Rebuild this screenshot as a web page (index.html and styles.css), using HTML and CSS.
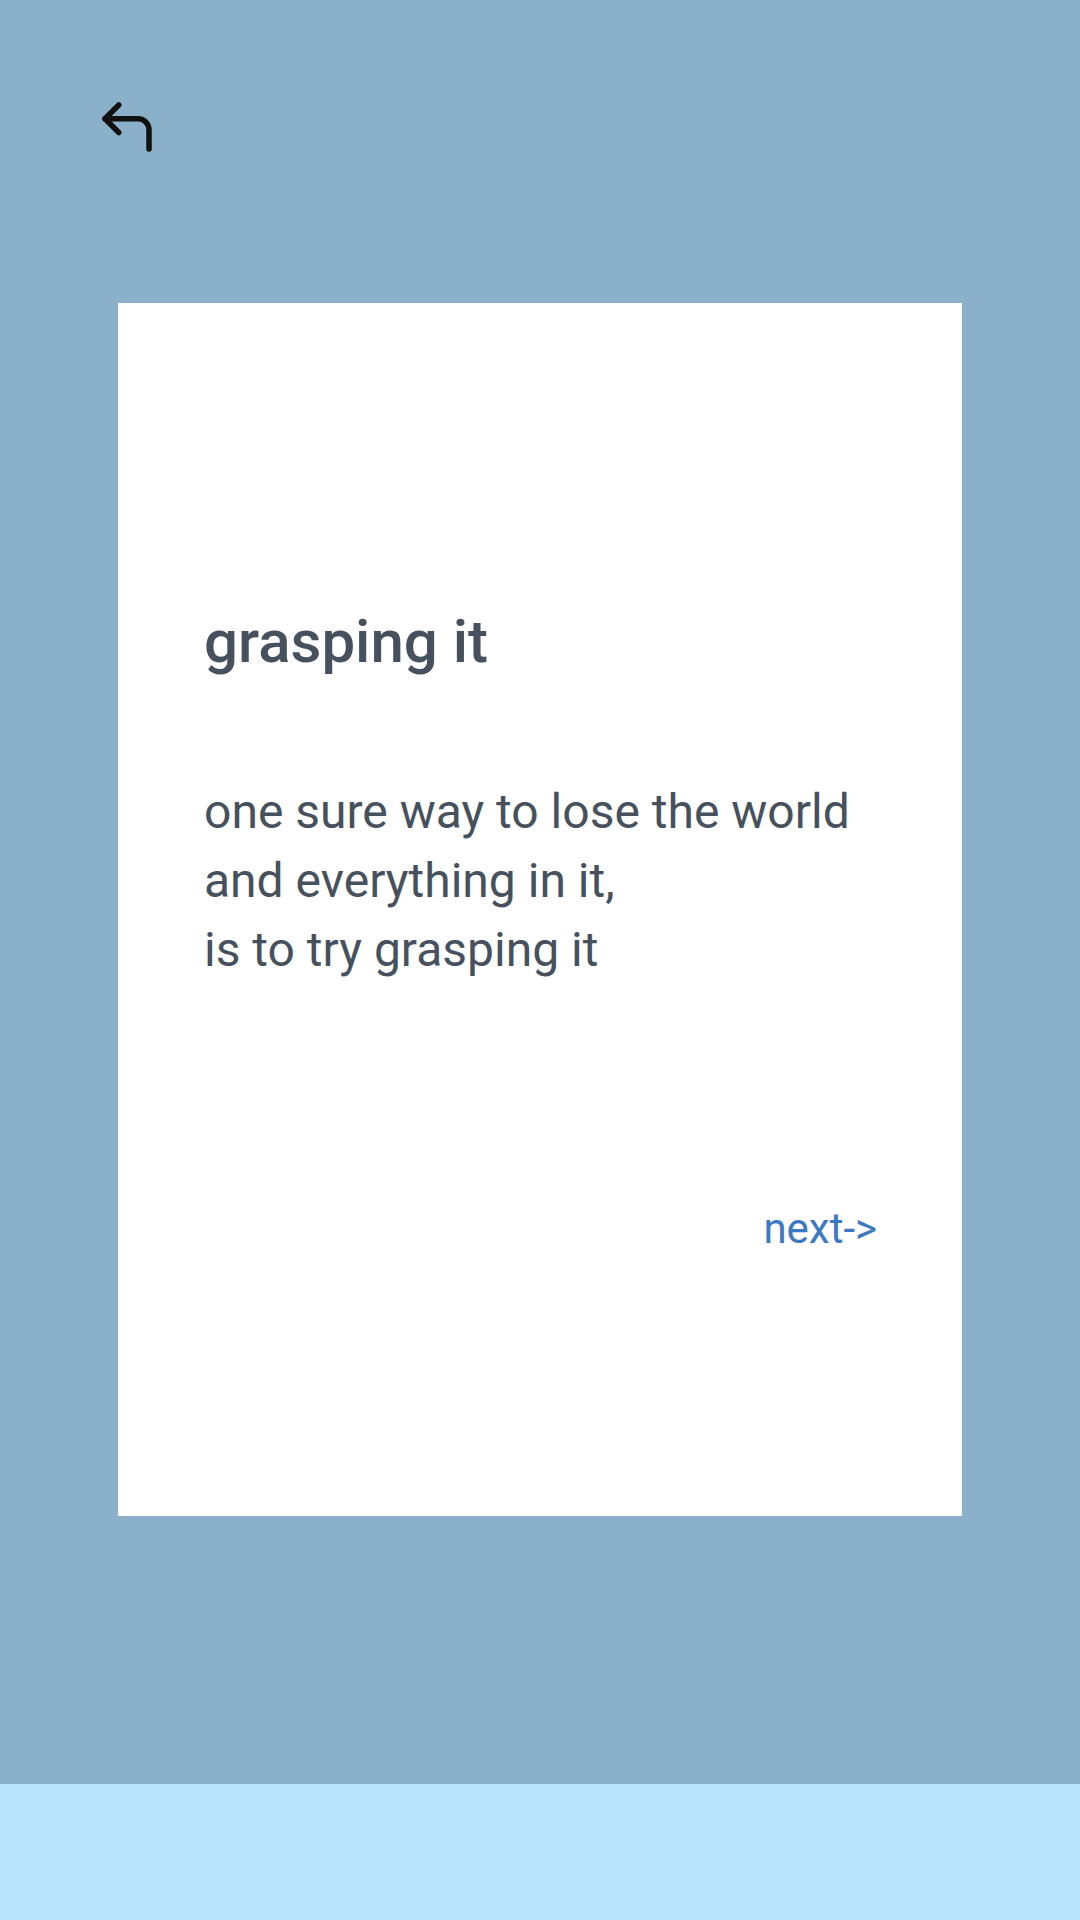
FILE: index.html
```html
<!DOCTYPE html>
<html>
<head>
<meta charset="utf-8">
<link rel="stylesheet" href="styles.css">
</head>
<body>
<div class="screen">
  <header class="topbar">
    <svg class="back" viewBox="0 0 24 24" fill="none" stroke="#111" stroke-width="2" stroke-linecap="round" stroke-linejoin="round">
      <polyline points="9 14 4 9 9 4"></polyline>
      <path d="M20 20v-7a4 4 0 0 0-4-4H4"></path>
    </svg>
  </header>
  <main class="stage">
    <section class="card">
      <h1 class="title">grasping it</h1>
      <p class="poem">one sure way to lose the world<br>and everything in it,<br>is to try grasping it</p>
      <div class="actions"><a class="next">next-&gt;</a></div>
    </section>
  </main>
  <footer class="band"></footer>
</div>
</body>
</html>
```
FILE: styles.css
```css
html, body {
  margin: 0;
  padding: 0;
}
body {
  width: 1080px;
  height: 1920px;
  font-family: Roboto, "Liberation Sans", sans-serif;
  background: #8bb0c9;
}
.screen {
  display: flex;
  flex-direction: column;
  height: 1920px;
}
.topbar {
  height: 303px;
  box-sizing: border-box;
  padding: 94px 0 0 94px;
}
.back {
  display: block;
  width: 66px;
  height: 66px;
}
.stage {
  flex: 1;
  display: flex;
  justify-content: center;
  align-items: flex-start;
}
.card {
  width: 844px;
  height: 1213px;
  box-sizing: border-box;
  background: #ffffff;
  padding: 309px 85px 0 86px;
}
.title {
  margin: 0;
  font-size: 60px;
  line-height: 60px;
  font-weight: 500;
  color: #47515e;
}
.poem {
  margin: 105px 0 0;
  font-size: 48px;
  line-height: 69px;
  font-weight: 400;
  color: #47515e;
}
.actions {
  margin-top: 224px;
  display: flex;
  justify-content: flex-end;
}
.next {
  font-size: 42px;
  line-height: 42px;
  color: #3c79c1;
}
.band {
  height: 136px;
  background: #b8e5fc;
}
```
